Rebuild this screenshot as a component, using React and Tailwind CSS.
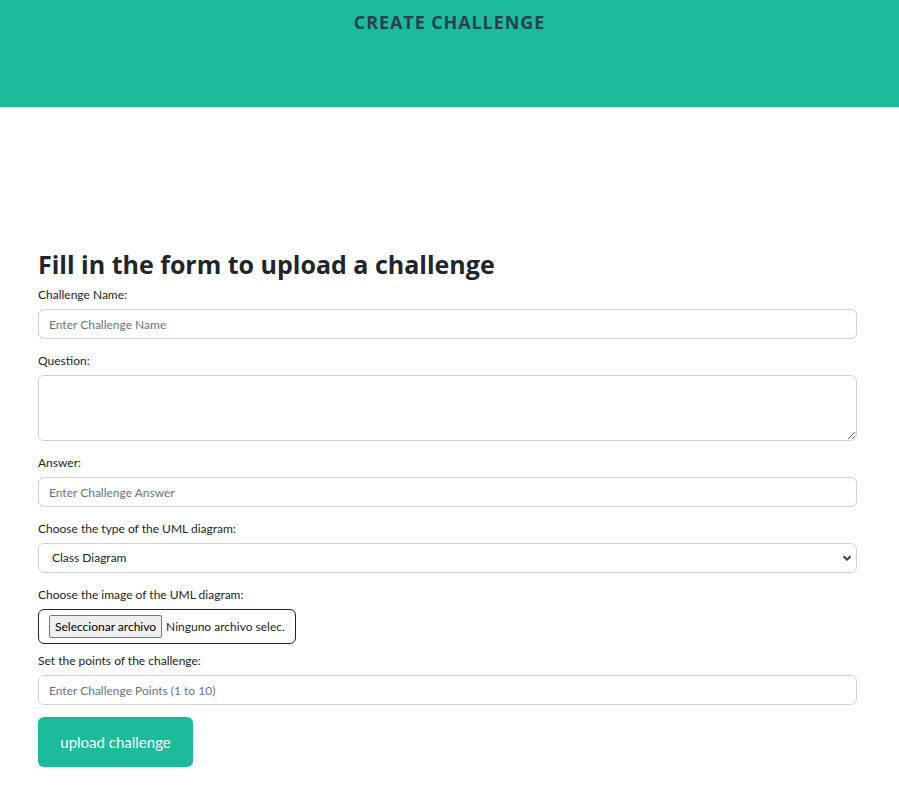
import { useState } from 'react'

const HEAD_FONT = "font-['Open_Sans',sans-serif]"
const BODY_FONT = "font-['Lato',sans-serif]"

function Label({ children }) {
  return <label className="block text-[12px] leading-[17px] text-[#212529] mb-[6px]">{children}</label>
}

const inputCls =
  'block w-full h-[30px] px-[10px] text-[12px] text-[#495057] placeholder:text-[#6c757d] border border-[#ced4da] rounded-[6px] bg-white outline-none'

function App() {
  const [uml, setUml] = useState('class')

  return (
    <div className={`min-h-screen bg-white ${BODY_FONT}`}>
      <header className="h-[107px] bg-[#1abc9c] pt-[11px]">
        <h1 className={`text-center text-[18px] leading-[22px] font-bold tracking-[0.05em] text-[#2c3e50] ${HEAD_FONT}`}>
          CREATE CHALLENGE
        </h1>
      </header>

      <main className="pl-[38px] pr-[42px] pt-[142px]">
        <h2 className={`text-[25px] leading-[31px] font-bold text-[#212529] mb-[6px] ${HEAD_FONT}`}>
          Fill in the form to upload a challenge
        </h2>

        <form onSubmit={(e) => e.preventDefault()}>
          <Label>Challenge Name:</Label>
          <input className={`${inputCls} mb-[13px]`} placeholder="Enter Challenge Name" />

          <Label>Question:</Label>
          <textarea className="block w-full h-[66px] px-[10px] py-[6px] text-[12px] border border-[#ced4da] rounded-[6px] bg-white outline-none mb-[13px]" />

          <Label>Answer:</Label>
          <input className={`${inputCls} mb-[13px]`} placeholder="Enter Challenge Answer" />

          <Label>Choose the type of the UML diagram:</Label>
          <div className="relative mb-[13px]">
            <select
              value={uml}
              onChange={(e) => setUml(e.target.value)}
              className="block w-full h-[30px] pl-[13px] pr-[30px] text-[12px] text-[#212529] border border-[#ced4da] rounded-[6px] bg-white outline-none appearance-none"
            >
              <option value="class">Class Diagram</option>
              <option value="sequence">Sequence Diagram</option>
              <option value="usecase">Use Case Diagram</option>
            </select>
            <svg className="absolute right-[4px] top-[9px] w-[12px] h-[12px] pointer-events-none" viewBox="0 0 12 12">
              <path d="M2.5 4.2 L6 7.6 L9.5 4.2" fill="none" stroke="#3b3b3b" strokeWidth="2" />
            </svg>
          </div>

          <Label>Choose the image of the UML diagram:</Label>
          <div className="flex items-center w-[258px] h-[35px] border border-[#222] rounded-[6px] px-[10px] mb-[8px]">
            <span className="h-[23px] px-[5px] flex items-center text-[12px] text-black bg-[#efefef] border border-[#767676] rounded-[2px]">
              Seleccionar archivo
            </span>
            <span className="ml-[4px] text-[12px] text-[#212529] whitespace-nowrap">Ninguno archivo selec.</span>
          </div>

          <Label>Set the points of the challenge:</Label>
          <input className={`${inputCls} mb-[12px]`} placeholder="Enter Challenge Points (1 to 10)" />

          <button
            type="submit"
            className="w-[155px] h-[50px] rounded-[6px] bg-[#1abc9c] text-white text-[15px]"
          >
            upload challenge
          </button>
        </form>
      </main>
    </div>
  )
}

export default App
